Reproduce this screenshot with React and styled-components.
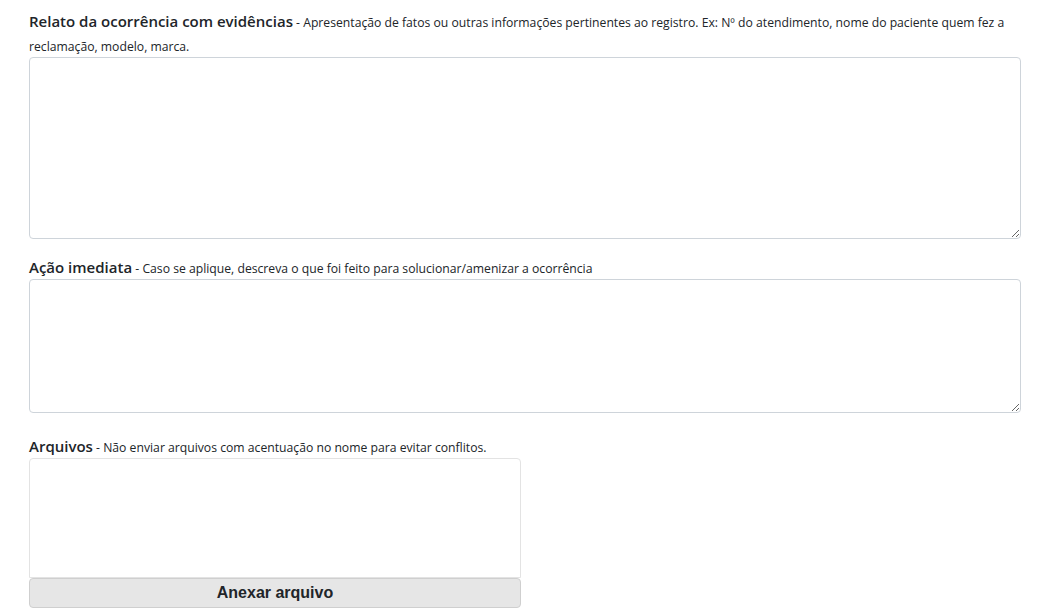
import styled, { createGlobalStyle } from "styled-components";

const GlobalStyle = createGlobalStyle`
  body {
    margin: 0;
    background: #fff;
    color: #212529;
    font-family: "Open Sans", "Noto Sans", sans-serif;
  }
`;

function App() {
  return (
    <Page>
      <GlobalStyle />
      <Group $gap={16}>
        <Label>
          <Title>Relato da ocorrência com evidências</Title>
          <Hint> - Apresentação de fatos ou outras informações pertinentes ao registro. Ex: Nº do atendimento, nome do paciente quem fez a reclamação, modelo, marca.</Hint>
        </Label>
        <TextArea $height={182} />
      </Group>

      <Group $gap={21}>
        <Label>
          <Title>Ação imediata</Title>
          <Hint> - Caso se aplique, descreva o que foi feito para solucionar/amenizar a ocorrência</Hint>
        </Label>
        <TextArea $height={134} />
      </Group>

      <Group $gap={0}>
        <Label>
          <Title>Arquivos</Title>
          <Hint> - Não enviar arquivos com acentuação no nome para evitar conflitos.</Hint>
        </Label>
        <FileBox>
          <FileList />
          <AttachButton type="button">Anexar arquivo</AttachButton>
        </FileBox>
      </Group>
    </Page>
  );
}

const Page = styled.div`
  padding: 9px 29px 0;
`;

const Group = styled.div`
  margin-bottom: ${props => props.$gap}px;
`;

// text sits a touch lower than the box, padding pushes it down without moving the field
const Label = styled.div`
  line-height: 24px;
  font-size: 12.2px;
  padding-top: 2px;
  margin-bottom: -2px;
`;

const Title = styled.span`
  font-size: 15px;
  line-height: 1;
  font-weight: 600;
  color: #212529;
`;

const Hint = styled.span`
  font-size: 12.2px;
  line-height: 1;
  color: #212529;
`;

const TextArea = styled.textarea`
  display: block;
  box-sizing: border-box;
  width: 100%;
  height: ${props => props.$height}px;
  border: 1px solid #ced4da;
  border-radius: 4px;
  padding: 6px 12px;
  font-family: inherit;
  font-size: 14px;
  resize: vertical;
  outline: none;
`;

const FileBox = styled.div`
  width: 492px;
  display: flex;
  flex-direction: column;
`;

const FileList = styled.div`
  height: 120px;
  box-sizing: border-box;
  border: 1px solid #e3e3e3;
  border-radius: 4px 4px 0 0;
  background: #fff;
`;

const AttachButton = styled.button`
  height: 30px;
  box-sizing: border-box;
  border: 1px solid #cfcfcf;
  border-radius: 4px;
  background: #e6e6e6;
  color: #212529;
  font-family: "Liberation Sans", Arial, sans-serif;
  font-weight: 700;
  font-size: 16px;
  cursor: pointer;
`;

export default App;
